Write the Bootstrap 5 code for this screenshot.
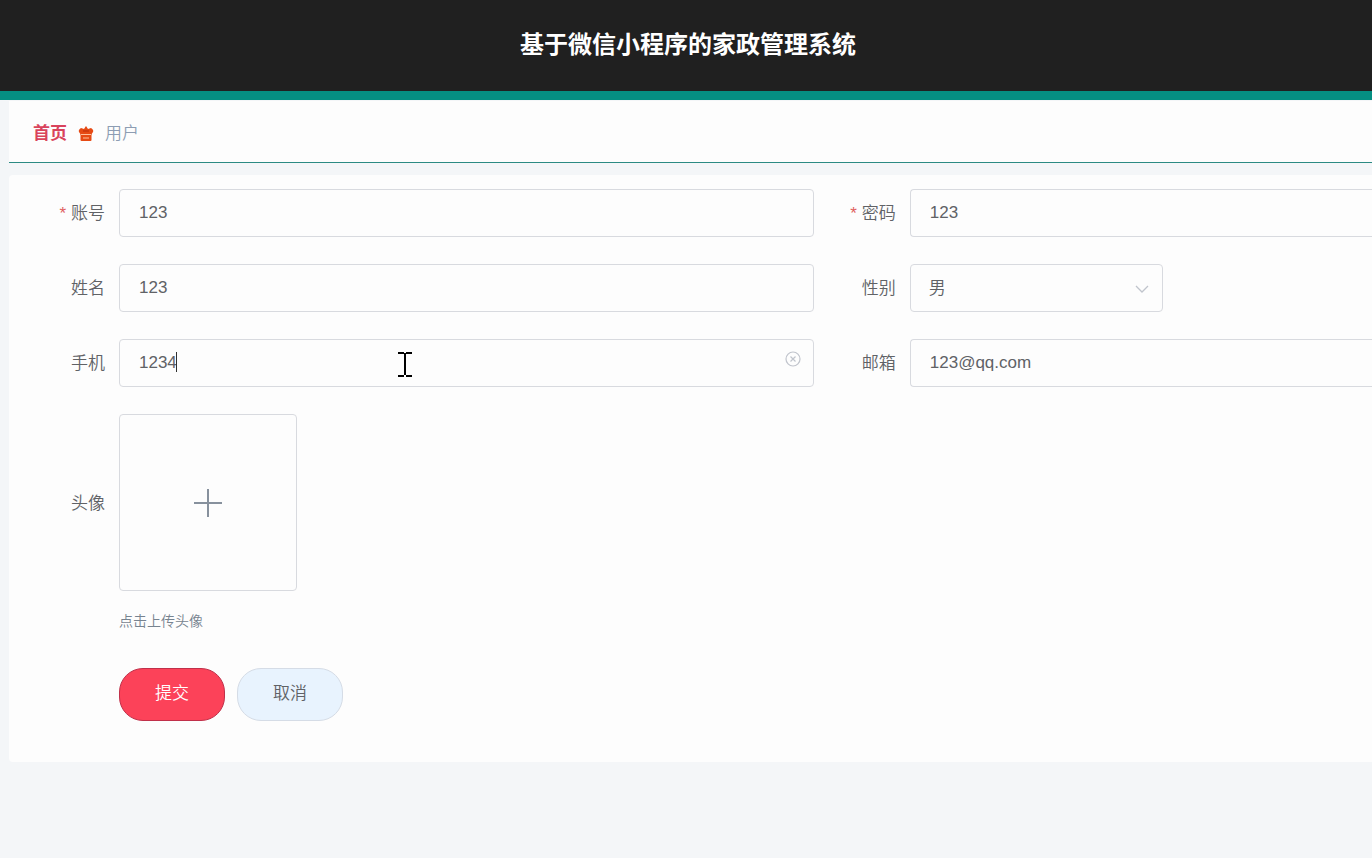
<!DOCTYPE html>
<html lang="zh-CN">
<head>
<meta charset="utf-8">
<meta name="viewport" content="width=device-width, initial-scale=1">
<title>基于微信小程序的家政管理系统</title>
<link href="https://cdn.jsdelivr.net/npm/bootstrap@5.3.0/dist/css/bootstrap.min.css" rel="stylesheet">
<style>
  body { font-family: "Liberation Sans", "Noto Sans CJK SC", sans-serif; font-size: 17px; line-height: 24px; color: #606266; background: #f4f6f8; }
  .app-header { background: #202020; border-bottom: 9px solid #058f82; padding: 29px 0 30px 4px; }
  .app-title { font-size: 24px; line-height: 32px; font-weight: 700; color: #fff; }
  .app-main { padding-left: 9px; padding-top: 1px; }
  .crumb-bar { background: #fdfdfd; border-bottom: 1px solid #2b8a83; padding: 21px 24px 16px; margin-bottom: 12px; }
  .crumb-home { color: #d9435c; font-weight: 700; }
  .crumb-here { color: #8d9db3; font-weight: 350; }
  .panel { background: #fdfdfd; padding: 14px 0 41px 14px; border-radius: 4px 0 0 4px; }
  .fields { display: grid; grid-template-columns: 17fr 12fr; row-gap: 27px; }
  .field-label { flex: 0 0 96px; padding: 2px 14px 0 0; text-align: right; font-weight: 350; }
  .required::before { content: "*"; color: #e0605f; margin-right: 5px; font-weight: 400; }
  .field-input, .field-select { height: 48px; border: 1px solid #d8dadf; border-radius: 4px; background-color: #fdfdfd; color: #606266; font-size: 17px; line-height: 24px; padding: 11px 19px; }
  .field-select { width: 253px; padding: 12px 18px 10px; font-weight: 350; background-image: none; }
  .edge { border-right: 0; border-radius: 4px 0 0 4px; }
  .field-input:focus, .field-select:focus { box-shadow: none; border-color: #c0c4cc; }
  .select-arrow { right: 14px; top: 18px; pointer-events: none; }
  .clear-btn { right: 13px; top: 12px; line-height: 0; }
  .text-caret { left: 57px; top: 13px; width: 1px; height: 20px; background: #303030; }
  .pointer { left: 40%; top: 12px; pointer-events: none; }
  .upload { width: 178px; height: 177px; border: 1px solid #d8dadf; border-radius: 4px; background: #fdfdfd; }
  .below { margin-left: 96px; }
  .hint { font-size: 14px; line-height: 20px; font-weight: 350; color: #77838f; margin-top: 20px; }
  .actions { gap: 12px; margin-top: 37px; }
  .action { height: 53px; padding: 0 35px 2px; border-radius: 24px; font-size: 17px; font-weight: 350; line-height: 24px; }
  .action-submit, .action-submit:hover { background: #fc4259; border-color: #c0304a; color: #fff; }
  .action-cancel, .action-cancel:hover { background: #e8f3fe; border-color: #d5dce6; color: #606266; }
</style>
</head>
<body>
<header class="app-header text-center">
  <h1 class="app-title m-0">基于微信小程序的家政管理系统</h1>
</header>
<main class="app-main overflow-hidden">
  <nav class="crumb-bar d-flex align-items-center" aria-label="面包屑">
    <a href="#" class="crumb-home text-decoration-none">首页</a>
    <svg class="mx-2" width="22" height="16" viewBox="1 0 22 16" aria-hidden="true">
      <path d="M12 0l2 3 3-1q3 2 2 4l-2 3H7L5 6q-1-2 2-4l3 1z" fill="#e64a14"/>
      <path d="M6.500 8h11v6q0 1-1 1h-9q-1 0-1-1z" fill="#e64a14"/>
      <path d="M7 8.500h10M9 12h6" stroke="#ffc09c" stroke-width="1"/>
      <path d="M9 5h6" stroke="#b92d0b"/>
    </svg>
    <span class="crumb-here">用户</span>
  </nav>
  <form class="panel">
    <div class="fields">
      <div class="d-flex align-items-center">
        <label class="field-label required" for="account">账号</label>
        <input class="form-control field-input" id="account" type="text" value="123">
      </div>
      <div class="d-flex align-items-center">
        <label class="field-label required" for="password">密码</label>
        <input class="form-control field-input edge" id="password" type="text" value="123">
      </div>
      <div class="d-flex align-items-center">
        <label class="field-label" for="fullname">姓名</label>
        <input class="form-control field-input" id="fullname" type="text" value="123">
      </div>
      <div class="d-flex align-items-center">
        <label class="field-label" for="gender">性别</label>
        <div class="position-relative">
          <select class="form-select field-select" id="gender"><option>男</option><option>女</option></select>
          <svg class="select-arrow position-absolute" width="14" height="14" viewBox="0 0 14 14" fill="none" stroke="#c0c4cc" stroke-width="1.3" aria-hidden="true"><path d="M1 4l6 6 6-6"/></svg>
        </div>
      </div>
      <div class="d-flex align-items-center">
        <label class="field-label" for="phone">手机</label>
        <div class="position-relative flex-grow-1">
          <input class="form-control field-input" id="phone" type="text" value="1234">
          <span class="text-caret position-absolute"></span>
          <svg class="pointer position-absolute" width="16" height="26" viewBox="0 0 16 26" fill="none" stroke="#000" stroke-width="2" aria-hidden="true"><path d="M1 2h6M9 2h6M8 2v22M1 25h6M9 25h6"/></svg>
          <button type="button" class="clear-btn btn p-0 border-0 position-absolute" aria-label="清空">
            <svg width="16" height="16" viewBox="0 0 16 16" fill="none" stroke="#c0c4cc" stroke-width="1.2"><circle cx="8" cy="8" r="7"/><path d="M5.500 5.500l5 5M10.500 5.500l-5 5"/></svg>
          </button>
        </div>
      </div>
      <div class="d-flex align-items-center">
        <label class="field-label" for="mail">邮箱</label>
        <input class="form-control field-input edge" id="mail" type="text" value="123@qq.com">
      </div>
      <div class="d-flex align-items-center">
        <label class="field-label" for="avatar">头像</label>
        <button type="button" id="avatar" class="upload btn p-0 d-flex align-items-center justify-content-center">
          <svg width="28" height="28" viewBox="0 0 28 28" stroke="#87919d" stroke-width="2" aria-hidden="true"><path d="M14 0v28M0 14h28"/></svg>
        </button>
      </div>
    </div>
    <div class="below">
      <div class="hint">点击上传头像</div>
      <div class="actions d-flex">
        <button type="button" class="btn action action-submit">提交</button>
        <button type="button" class="btn action action-cancel">取消</button>
      </div>
    </div>
  </form>
</main>
<script src="https://cdn.jsdelivr.net/npm/bootstrap@5.3.0/dist/js/bootstrap.bundle.min.js"></script>
</body>
</html>
